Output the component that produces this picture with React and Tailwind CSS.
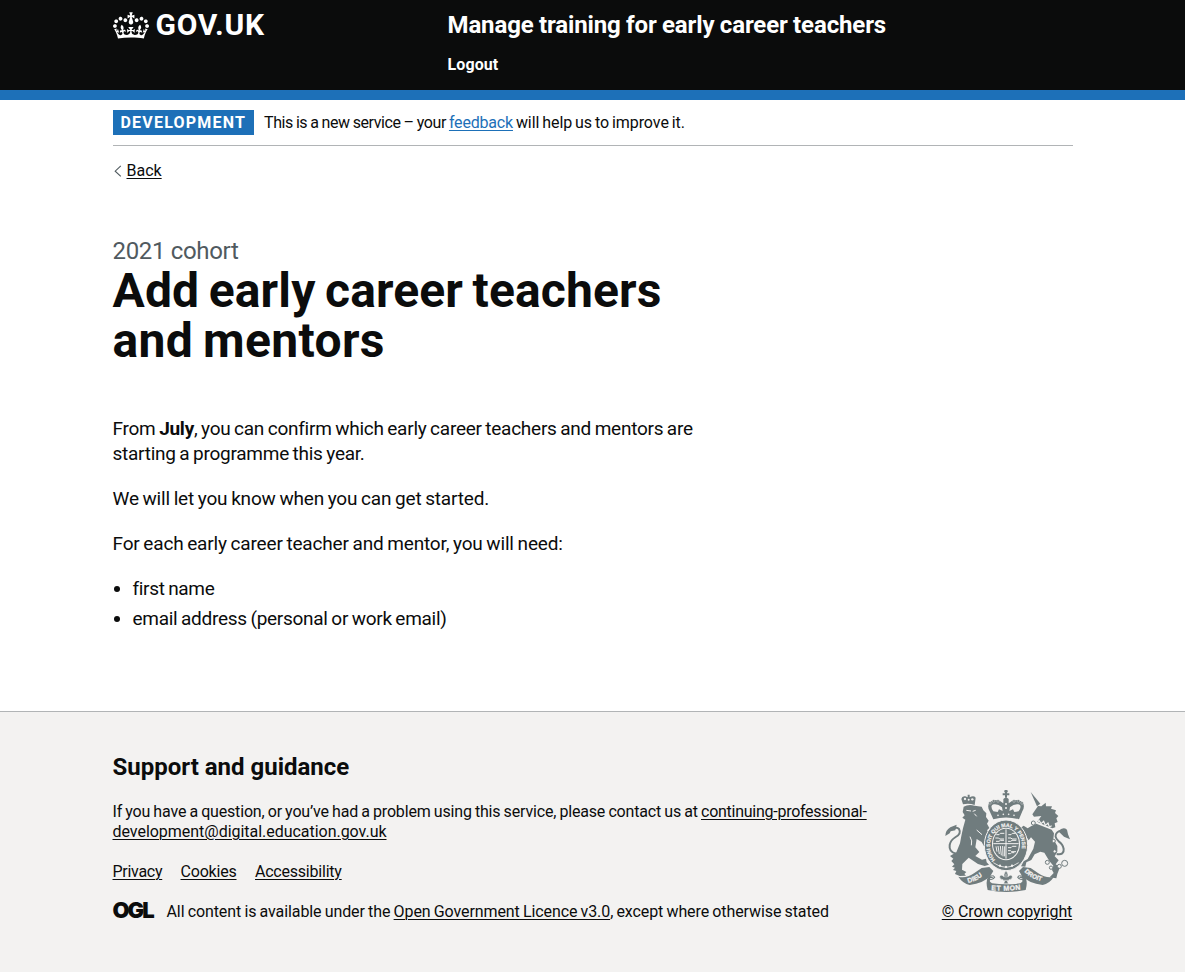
import React from "react";

const linkClass = "underline underline-offset-[2px] decoration-1";

function CrownLogo() {
  return (
    <svg className="mt-[1.5px] h-[27px] w-9 shrink-0 fill-white" viewBox="0 0 132 97" aria-hidden="true">
      <path d="M25 30.2c3.5 1.5 7.7-.2 9.1-3.7 1.5-3.6-.2-7.8-3.9-9.2-3.6-1.4-7.6.3-9.1 3.9-1.4 3.5.3 7.5 3.9 9zM9 39.5c3.6 1.5 7.8-.2 9.2-3.7 1.5-3.6-.2-7.8-3.9-9.1-3.6-1.5-7.6.2-9.1 3.8-1.4 3.5.3 7.5 3.8 9zM4.4 57.2c3.5 1.5 7.7-.2 9.1-3.8 1.5-3.6-.2-7.7-3.9-9.1-3.5-1.5-7.6.3-9.1 3.8-1.4 3.5.3 7.6 3.9 9.1zm38.3-21.4c3.5 1.5 7.7-.2 9.1-3.8 1.5-3.6-.2-7.7-3.9-9.1-3.6-1.5-7.6.3-9.1 3.8-1.3 3.6.4 7.7 3.9 9.1zm64.4-5.6c-3.6 1.5-7.8-.2-9.1-3.7-1.5-3.6.2-7.8 3.8-9.2 3.6-1.4 7.7.3 9.2 3.9 1.3 3.5-.4 7.5-3.9 9zm15.9 9.3c-3.6 1.5-7.7-.2-9.1-3.7-1.5-3.6.2-7.8 3.7-9.1 3.6-1.5 7.7.2 9.2 3.8 1.5 3.5-.3 7.5-3.8 9zm4.7 17.7c-3.6 1.5-7.8-.2-9.2-3.8-1.5-3.6.2-7.7 3.9-9.1 3.6-1.5 7.7.3 9.2 3.8 1.3 3.5-.4 7.6-3.9 9.1zM89.3 35.8c-3.6 1.5-7.8-.2-9.2-3.8-1.4-3.6.2-7.7 3.9-9.1 3.6-1.5 7.7.3 9.2 3.8 1.4 3.6-.3 7.7-3.9 9.1zM69.7 17.7l8.9 4.7V9.3l-8.9 2.8c-.2-.3-.5-.6-.9-.9L72.4 0H59.6l3.5 11.2c-.3.3-.6.5-.9.9l-8.8-2.8v13.1l8.8-4.7c.3.3.6.7.9.9l-5 15.4v.1c-.2.8-.4 1.6-.4 2.4 0 4.1 3.1 7.5 7 8.1h.2c.3 0 .7.1 1 .1.4 0 .7 0 1-.1h.2c4-.6 7.1-4.1 7.1-8.1 0-.8-.1-1.7-.4-2.4V34l-5.1-15.4c.4-.2.7-.6 1-.9zM66 92.8c16.9 0 32.8 1.1 47.1 3.2 4-16.9 8.9-26.7 14-33.5l-9.6-3.4c1 4.9 1.1 7.2 0 10.2-1.5-1.4-3-4.3-4.2-8.7L108.6 76c2.8-2 5-3.2 7.5-3.3-4.4 9.4-10 11.9-13.6 11.2-4.3-.8-6.3-4.6-5.6-7.9 1-4.7 5.7-5.9 8-.5 4.3-8.7-3-11.4-7.6-8.8 7.1-7.2 7.9-13.5 2.1-21.1-8 6.1-8.1 12.3-4.5 20.8-4.7-5.4-12.1-2.5-9.5 6.2 3.4-5.2 7.9-2 7.2 3.1-.6 4.3-6.4 7.8-13.5 7.2-10.3-.9-10.9-8-11.2-13.8 2.5-.5 7.1 1.8 11 7.3L80.2 60c-4.1 4.4-8 5.3-12.3 5.4 1.4-4.4 8-11.6 8-11.6H55.5s6.4 7.2 7.9 11.6c-4.2-.1-8-1-12.3-5.4l1.4 16.4c3.9-5.5 8.5-7.7 10.9-7.3-.3 5.8-.9 12.8-11.1 13.8-7.2.6-12.9-2.9-13.5-7.2-.7-5 3.8-8.3 7.1-3.1 2.7-8.7-4.6-11.6-9.4-6.2 3.7-8.5 3.6-14.7-4.6-20.8-5.8 7.6-5 13.9 2.2 21.1-4.7-2.6-11.9.1-7.7 8.8 2.3-5.5 7.1-4.2 8.1.5.7 3.3-1.3 7.1-5.7 7.9-3.5.7-9-1.8-13.5-11.2 2.5.1 4.7 1.3 7.5 3.3l-4.7-15.4c-1.2 4.4-2.7 7.2-4.3 8.7-1.1-3-.9-5.3 0-10.2l-9.5 3.4c5 6.9 9.9 16.7 14 33.5 14.8-2.1 30.8-3.2 47.7-3.2z" />
    </svg>
  );
}

function RoyalArms() {
  const ink = "#707c7e";
  const paper = "#f3f2f1";
  return (
    <svg className="h-[102px] w-[125px]" viewBox="45 30 375 306" aria-hidden="true" fill={ink}>
      <defs>
        <path id="garter" d="M196 240 A48 57 0 1 1 260 240" />
        <path id="scroll-left" d="M115 309 Q148 301 174 273" />
        <path id="scroll-mid" d="M184 331 Q230 334 278 328" />
        <path id="scroll-right" d="M283 275 Q305 299 346 306" />
      </defs>

      {/* Lion: crown, mane and body, tail */}
      <path d="M99 73 L94 57 Q96 47 106 49 L113 52 L113 44 L119 44 L119 52 Q131 45 137 53 L134 75 Q116 68 99 73Z" />
      <g fill={paper}>
        <circle cx="105" cy="57" r="3.5" />
        <circle cx="116" cy="59" r="3" />
        <circle cx="127" cy="58" r="3.5" />
      </g>
      <path d="M101 80 Q115 72 134 77 L155 80 L160 91 L169 100 L168 111 L176 122 L171 131 L178 144 L171 151 L181 162 L177 181 L182 189 L170 193 L177 207 L165 204 L155 186 L140 177 L136 202 L148 216 L136 228 L156 239 L168 236 L170 247 L177 254 L164 258 L144 252 L116 233 L97 252 L96 269 L109 276 L103 282 L108 287 L89 288 L75 282 L79 273 L69 270 L75 263 L66 260 L73 253 L64 243 L70 236 L60 228 L79 217 L90 190 L94 168 L99 145 L106 119 L97 113 L104 106 L98 96Z" />
      <path d="M109 91 l14 2 M128 94 l9 -3 M133 101 l7 8 M140 150 l16 14 M120 170 q8 12 4 26" stroke={paper} strokeWidth="3" fill="none" />
      <path d="M78 221 Q56 216 59 195 Q61 181 77 171 Q95 161 87 147 Q81 140 71 146" fill="none" stroke={ink} strokeWidth="6" />
      <path d="M46 168 Q46 151 61 142 L80 134 L76 151 L62 154 L59 160Z" />

      {/* Unicorn: horn, head, body, tail */}
      <path d="M302 36 L331 71 L321 79Z" />
      <path d="M307 103 L324 78 L334 79 L347 68 L348 79 L366 79 L363 86 L378 91 L375 99 L385 108 L379 115 L383 126 L374 130 L376 142 L367 145 L321 126 L334 108 L312 110Z" />
      <path d="M319 131 L365 149 L372 160 L370 177 L382 198 L382 215 L374 229 L386 241 L377 253 L390 261 L382 282 L379 295 L359 292 L371 279 L366 270 L370 257 L358 243 L343 218 L331 215 L314 223 L304 240 L289 247 L286 260 L273 259 L281 244 L293 237 L310 206 L315 185 L303 172 L296 181 L289 170 L278 164 L281 151 L271 144 L281 137 L293 145 L303 139Z" />
      <path d="M322 129 L327 121 L333 131 L341 124 L346 136 L354 129 L358 141 L365 137" fill="none" stroke={paper} strokeWidth="3.5" />
      <path d="M380 222 Q403 226 401 207 Q399 193 386 184 Q370 169 381 158 Q390 149 402 157" fill="none" stroke={ink} strokeWidth="6" />
      <path d="M385 154 Q399 138 411 149 L414 163 L420 178 L402 170Z" />
      <g fill={paper} stroke={ink} strokeWidth="3">
        <circle cx="310" cy="129" r="6" />
        <circle cx="371" cy="183" r="5" />
        <circle cx="374" cy="214" r="5" />
        <circle cx="352" cy="247" r="6" />
        <circle cx="363" cy="263" r="5" />
        <circle cx="388" cy="259" r="6" />
        <circle cx="404" cy="250" r="9" />
      </g>

      {/* Central crown */}
      <circle cx="228" cy="34" r="5" />
      <path d="M225 34h6v6h7v6h-7v7h-6v-7h-7v-6h7z" />
      <path d="M190 118 L179 94 Q168 75 184 64 Q202 54 220 70 L220 57 Q228 50 236 57 L236 70 Q253 54 273 64 Q288 75 277 94 L267 118 Q228 107 190 118Z" />
      <g fill={paper}>
        <path d="M190 94 Q178 76 191 73 Q204 71 216 82 L218 93 L207 88 L203 96Z" />
        <path d="M266 94 Q278 76 265 73 Q252 71 240 82 L238 93 L249 88 L253 96Z" />
        <circle cx="228" cy="72" r="3" /><circle cx="228" cy="84" r="3" />
        <circle cx="204" cy="106" r="2.5" /><circle cx="220" cy="103" r="2.5" />
        <circle cx="236" cy="103" r="2.5" /><circle cx="252" cy="106" r="2.5" />
      </g>
      <g fill={ink} stroke={paper} strokeWidth="1">
        <circle cx="180" cy="69" r="4" /><circle cx="191" cy="63" r="4" /><circle cx="204" cy="63" r="4" />
        <circle cx="276" cy="69" r="4" /><circle cx="265" cy="63" r="4" /><circle cx="252" cy="63" r="4" />
      </g>

      {/* Garter and quartered shield */}
      <ellipse cx="228" cy="196" rx="65" ry="76" stroke={paper} strokeWidth="3" />
      <ellipse cx="228" cy="192" rx="42" ry="49" fill={paper} />
      <ellipse cx="228" cy="192" rx="39" ry="46" />
      <path d="M228 148v88M190 191h76" stroke={paper} strokeWidth="3" />
      <g fill="none" stroke={paper} strokeWidth="3">
        <path d="M199 164h8l4-4h12M196 174h10l3 3h13M198 184h9l4-3h11" />
        <path d="M235 164h8l4-4h10M234 174h9l3 3h14M234 184h8l4-3h13" />
        <path d="M198 199l3 16M204 198l4 24M211 198l3 28M218 198l1 31M224 199v30" />
        <path d="M234 203h9l4-4h12M234 212h8l3 3h13M234 221h7l4-3h8" />
      </g>
      <text fill={paper} fontFamily="Liberation Sans" fontWeight="700" fontSize="15.5" stroke={paper} strokeWidth="0.5">
        <textPath href="#garter">HONI SOIT QUI MAL Y PENSE</textPath>
      </text>
      <path d="M190 248 Q228 276 266 248" fill="none" stroke={paper} strokeWidth="2.5" />
      <circle cx="210" cy="257" r="3.5" fill={paper} />
      <circle cx="228" cy="261" r="3.5" fill={paper} />
      <circle cx="246" cy="257" r="3.5" fill={paper} />

      {/* Motto scroll with the fleur over its centre fold */}
      <path d="M85 290 Q108 296 132 280 L155 264 L178 261 L190 273 L181 288 Q160 310 119 315 Q99 311 85 290Z" />
      <path d="M372 290 Q349 296 325 280 L302 264 L279 261 L267 273 L276 288 Q296 310 338 315 Q358 311 372 290Z" />
      <path d="M177 287 Q190 281 196 292 Q190 302 181 300 Q176 304 186 310 Q228 316 271 310 Q281 304 276 300 Q267 302 261 292 Q267 281 280 287 Q296 298 287 330 Q228 342 173 330 Q165 300 177 287Z" />
      <path d="M182 288 Q190 286 190 292 Q188 297 180 296M275 288 Q267 286 267 292 Q269 297 277 296" fill="none" stroke={paper} strokeWidth="2.5" />
      <path d="M228 272 Q237 283 233 291 Q243 281 247 290 Q247 299 237 299 L237 303 L232 303 L235 311 L221 311 L224 303 L219 303 L219 299 Q209 299 209 290 Q213 281 223 291 Q219 283 228 272Z" stroke={paper} strokeWidth="1.5" />
      <path d="M228 281v12M217 301h22" fill="none" stroke={paper} strokeWidth="2" />
      <g fill={paper} stroke={paper} strokeWidth="0.8" fontFamily="Liberation Sans" fontWeight="700" fontSize="21">
        <text fontSize="20"><textPath href="#scroll-left">DIEU</textPath></text>
        <text><textPath href="#scroll-mid" textLength="88">ET MON</textPath></text>
        <text fontSize="19"><textPath href="#scroll-right">DROIT</textPath></text>
      </g>
    </svg>
  );
}

function Header() {
  return (
    <header className="h-[100px] border-b-[10px] border-[#1d70b8] bg-[#0b0c0c] text-white">
      <div className="mx-auto flex w-[960px] pt-[10px]">
        <a href="#" className="flex w-[335px] items-start">
          <CrownLogo />
          <span className="ml-[7px] text-[30px] leading-[30px] font-bold tracking-[0.75px]">GOV.UK</span>
        </a>
        <div>
          <p className="text-[24px] leading-[30px] font-bold tracking-[-0.13px] [word-spacing:-0.4px]">
            Manage training for early career teachers
          </p>
          <p className="mt-[15px] text-base leading-5 font-bold tracking-[0.1px]">Logout</p>
        </div>
      </div>
    </header>
  );
}

function PhaseBanner() {
  return (
    <div className="flex h-[46px] items-center border-b border-[#b1b4b6]">
      <strong className="h-[25px] w-[141px] bg-[#1d70b8] pl-2 text-base leading-[25px] font-bold tracking-[1.2px] text-white">
        DEVELOPMENT
      </strong>
      <p className="ml-[10.5px] whitespace-pre text-base leading-5">
        <span className="tracking-[-0.42px] [word-spacing:-0.5px]">This is a new service – your </span>
        <a href="#" className={`tracking-[-0.19px] text-[#1d70b8] ${linkClass}`}>feedback</a>
        <span className="tracking-[-0.06px] [word-spacing:-1px]"> will help us to improve it.</span>
      </p>
    </div>
  );
}

function Content() {
  return (
    <main className="pt-[55px] pb-20">
      <span className="block text-[24px] leading-[30px] tracking-[-0.33px] text-[#505a5f]">2021 cohort</span>
      <h1 className="text-[48px] leading-[50px] font-bold tracking-[0.13px] [word-spacing:-2.5px]">
        Add early career teachers
        <br />
        <span className="tracking-[0.36px]">and mentors</span>
      </h1>
      <div className="mt-[50px] flex flex-col gap-5 text-[19px] leading-[25px] [word-spacing:-0.8px]">
        <p className="tracking-[-0.26px]">
          From <strong>July</strong>, you can confirm which early career teachers and mentors are
          <br />
          starting a programme this year.
        </p>
        <p className="tracking-[-0.18px]">We will let you know when you can get started.</p>
        <p className="tracking-[-0.17px]">For each early career teacher and mentor, you will need:</p>
        <ul className="flex list-disc flex-col gap-[5px] pl-5">
          <li className="tracking-[-0.32px]">first name</li>
          <li className="tracking-[-0.28px]">email address (personal or work email)</li>
        </ul>
      </div>
    </main>
  );
}

function Footer() {
  return (
    <footer className="h-[261px] border-t border-[#b1b4b6] bg-[#f3f2f1] pt-10">
      <div className="mx-auto flex w-[960px] items-end justify-between">
        <div className="text-base leading-5">
          <h2 className="text-[24px] leading-[30px] font-bold">Support and guidance</h2>
          <p className="mt-5 [word-spacing:-0.6px]">
            <span className="tracking-[-0.17px]">
              If you have a question, or you’ve had a problem using this service, please contact us at{" "}
            </span>
            <a href="#" className={linkClass}>
              <span className="tracking-[-0.26px]">continuing-professional-</span>
              <br />
              <span className="tracking-[-0.03px]">development@digital.education.gov.uk</span>
            </a>
          </p>
          <ul className="mt-5 flex gap-[18px]">
            <li className="w-[50px]"><a href="#" className={`tracking-[-0.28px] ${linkClass}`}>Privacy</a></li>
            <li className="w-[56.5px]"><a href="#" className={`tracking-[-0.2px] ${linkClass}`}>Cookies</a></li>
            <li><a href="#" className={`tracking-[-0.22px] ${linkClass}`}>Accessibility</a></li>
          </ul>
          <div className="mt-5 flex">
            <span className="w-[54px] font-['Inter',sans-serif] text-[22px] leading-[17px] font-black tracking-[-2px]">OGL</span>
            <p className="tracking-[-0.1px] [word-spacing:-0.6px]">
              All content is available under the{" "}
              <a href="#" className={linkClass}>Open Government Licence v3.0</a>, except where otherwise stated
            </p>
          </div>
        </div>
        <div className="flex w-[131px] flex-col items-center gap-[10px]">
          <RoyalArms />
          <a href="#" className={`text-base leading-5 whitespace-nowrap tracking-[-0.12px] ${linkClass}`}>© Crown copyright</a>
        </div>
      </div>
    </footer>
  );
}

export default function App() {
  return (
    <div className="min-h-screen bg-white font-['Roboto','Liberation_Sans',sans-serif] text-[#0b0c0c]">
      <Header />
      <div className="mx-auto w-[960px]">
        <PhaseBanner />
        <a href="#" className="mt-[15px] flex h-5 items-center text-base leading-5">
          <svg className="mr-[5px] h-3 w-[9px]" viewBox="0 0 9 12" fill="none" stroke="#505a5f" strokeWidth="1.1" aria-hidden="true">
            <path d="M7.8 0.8 2.2 6.2 7.8 11.4" />
          </svg>
          <span className={linkClass}>Back</span>
        </a>
        <Content />
      </div>
      <Footer />
    </div>
  );
}
